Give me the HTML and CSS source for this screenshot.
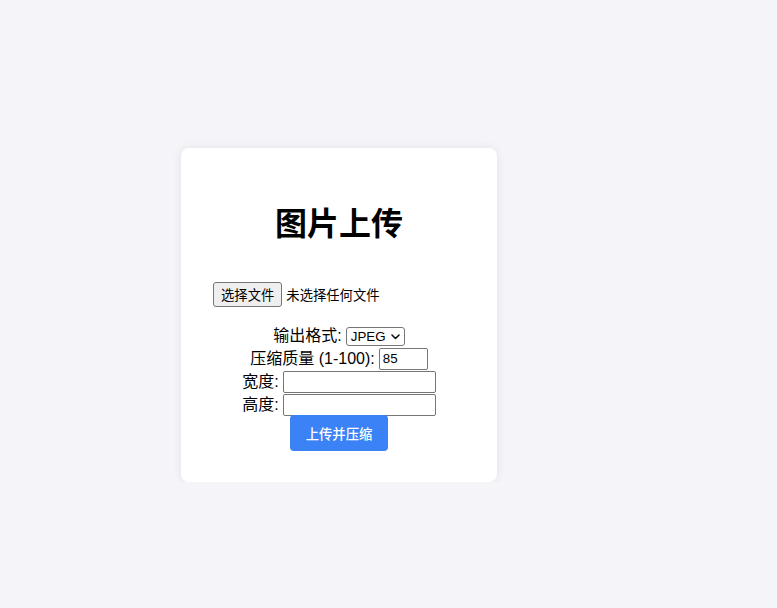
FILE: index.html
```html
<!DOCTYPE html>
<html lang="zh-CN">
<head>
<meta charset="utf-8">
<title>图片上传</title>
<link rel="stylesheet" href="styles.css">
</head>
<body>
<div class="card">
  <h1 class="title">图片上传</h1>
  <form class="form">
    <div class="file-row">
      <button type="button" class="file-btn">选择文件</button>
      <span class="file-status">未选择任何文件</span>
    </div>
    <div class="row row-first">
      <label class="label" for="fmt">输出格式:</label>
      <span class="select-wrap">
        <select id="fmt" class="select">
          <option>JPEG</option>
          <option>PNG</option>
          <option>WEBP</option>
        </select>
        <svg class="chevron" width="9" height="6" viewBox="0 0 9 6"><path d="M1 1 L4.5 4.5 L8 1" fill="none" stroke="#111" stroke-width="1.6" stroke-linecap="round" stroke-linejoin="round"/></svg>
      </span>
    </div>
    <div class="row">
      <label class="label" for="q">压缩质量 (1-100):</label>
      <input id="q" class="input input-small" type="text" value="85">
    </div>
    <div class="row">
      <label class="label" for="w">宽度:</label>
      <input id="w" class="input input-wide" type="text">
    </div>
    <div class="row">
      <label class="label" for="h">高度:</label>
      <input id="h" class="input input-wide" type="text">
    </div>
    <div class="row row-btn">
      <button type="button" class="submit">上传并压缩</button>
    </div>
  </form>
</div>
</body>
</html>
```

FILE: styles.css
```css
* { box-sizing: border-box; }

html, body {
  margin: 0;
  background: #f4f4f9;
}

body {
  padding: 148px 0 0 181px;
  font-family: "Liberation Sans", "Noto Sans CJK SC", sans-serif;
  color: #000;
  font-size: 16px;
}

.card {
  width: 316px;
  background: #fff;
  border-radius: 8px;
  box-shadow: 0 0 10px rgba(0, 0, 0, 0.08);
  padding: 32px 32px 31px;
}

.title {
  margin: 21px 0 0;
  font-size: 32px;
  line-height: 46px;
  font-weight: 700;
  text-align: center;
}

.form {
  margin: 0;
}

.file-row {
  margin-top: 35px;
  display: flex;
  align-items: center;
  gap: 4px;
  height: 25px;
}

.file-btn {
  height: 25px;
  padding: 0 7px;
  font-family: inherit;
  font-size: 13.33px;
  color: #000;
  background: #efefef;
  border: 1px solid #767676;
  border-radius: 3px;
}

.file-status {
  font-size: 13.33px;
}

.row {
  display: flex;
  justify-content: center;
  align-items: center;
  gap: 4px;
  height: 23px;
}

.row-first {
  margin-top: 18px;
  height: 22px;
}

.label {
  font-size: 16px;
  line-height: 20px;
}

.select-wrap {
  position: relative;
  display: inline-flex;
}

.select {
  appearance: none;
  -webkit-appearance: none;
  width: 59px;
  height: 19px;
  padding: 0 0 0 4px;
  font-family: inherit;
  font-size: 13.33px;
  line-height: 17px;
  color: #000;
  background: #fff;
  border: 1px solid #767676;
  border-radius: 3px;
}

.chevron {
  position: absolute;
  right: 5px;
  top: 7px;
  pointer-events: none;
}

.input {
  height: 22px;
  padding: 0 3px;
  font-family: inherit;
  font-size: 13.33px;
  color: #000;
  background: #fff;
  border: 1px solid #767676;
  border-radius: 2px;
}

.input-small { width: 49px; }
.input-wide { width: 153px; }

.row-btn {
  height: 36px;
  margin-top: -1px;
}

.submit {
  height: 36px;
  padding: 0 16px;
  font-family: inherit;
  font-size: 13.33px;
  font-weight: 500;
  color: #fff;
  background: #3b82f6;
  border: none;
  border-radius: 4px;
}
```
